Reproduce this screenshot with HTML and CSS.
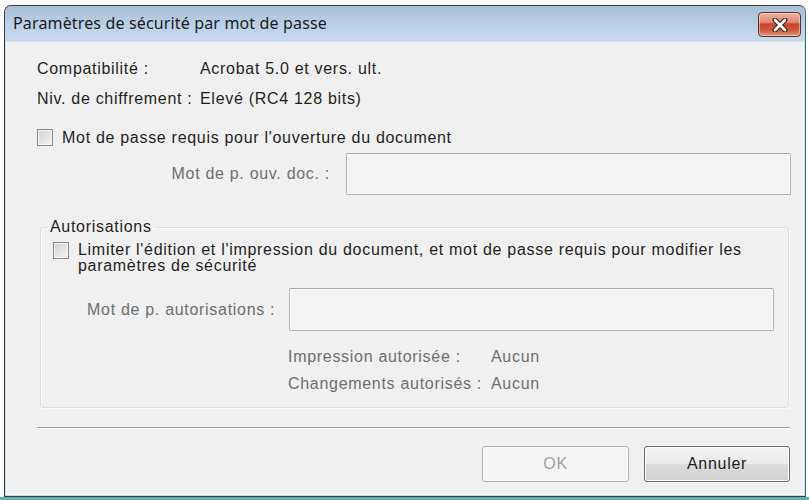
FILE: index.html
```html
<!DOCTYPE html>
<html lang="fr">
<head>
<meta charset="utf-8">
<title>Paramètres de sécurité par mot de passe</title>
<link rel="stylesheet" href="styles.css">
</head>
<body>
<div class="screen">
  <div class="window">
    <div class="titlebar">
      <span class="title">Paramètres de sécurité par mot de passe</span>
      <button class="close" aria-label="Fermer">
        <svg width="20" height="14" viewBox="0 0 20 14">
          <path d="M5 2 L15 12 M15 2 L5 12" stroke="#4a2a22" stroke-width="5" stroke-linecap="round"/>
          <path d="M5 2 L15 12 M15 2 L5 12" stroke="#ffffff" stroke-width="2.6" stroke-linecap="round"/>
        </svg>
      </button>
    </div>
    <div class="body">
      <div class="info">
        <span>Compatibilité :</span><span>Acrobat 5.0 et vers. ult.</span>
        <span>Niv. de chiffrement :</span><span>Elevé (RC4 128 bits)</span>
      </div>
      <label class="check">
        <span class="box"></span>
        <span>Mot de passe requis pour l'ouverture du document</span>
      </label>
      <div class="pwd-row open">
        <span class="dim label">Mot de p. ouv. doc. :</span>
        <span class="field"></span>
      </div>
      <fieldset class="group">
        <legend>Autorisations</legend>
        <label class="check multi">
          <span class="box"></span>
          <span>Limiter l'édition et l'impression du document, et mot de passe requis pour modifier les paramètres de sécurité</span>
        </label>
        <div class="pwd-row perm">
          <span class="dim label">Mot de p. autorisations :</span>
          <span class="field"></span>
        </div>
        <div class="perm-info dim">
          <span>Impression autorisée :</span><span>Aucun</span>
          <span>Changements autorisés :</span><span>Aucun</span>
        </div>
      </fieldset>
      <div class="separator"></div>
      <div class="buttons">
        <button class="btn ok disabled">OK</button>
        <button class="btn">Annuler</button>
      </div>
    </div>
  </div>
</div>
</body>
</html>
```
FILE: styles.css
```css
html, body {
  margin: 0;
  padding: 0;
  background: #ffffff;
}

.screen {
  width: 809px;
  height: 497px;
  border-bottom: 3px solid #5cb3a8;
  overflow: hidden;
  font-family: "Liberation Sans", Arial, sans-serif;
  font-size: 16px;
  letter-spacing: 0.7px;
  color: #1f1f1f;
}

.window {
  box-sizing: border-box;
  width: 802px;
  height: 492px;
  margin: 5px 0 0 4px;
  border: 1px solid #3b3b3b;
  border-right-color: #3f6f6b;
  border-radius: 7px 7px 0 0;
  overflow: hidden;
  display: flex;
  flex-direction: column;
  background: #c4d7ec;
}

.titlebar {
  height: 35px;
  flex: none;
  display: flex;
  align-items: center;
  padding-left: 8px;
  padding-right: 4px;
  background: linear-gradient(#a9bfd6, #bcd2ea 60%, #c6daee);
}

.title {
  font-family: "Noto Sans", "Open Sans", sans-serif;
  font-size: 16px;
  letter-spacing: 0.15px;
  color: #1b1b1b;
  margin-top: -2px;
}

.close {
  margin-left: auto;
  align-self: flex-start;
  margin-top: 6px;
  width: 43px;
  height: 25px;
  padding: 0;
  border: 1px solid #5b3128;
  border-radius: 4px;
  background: linear-gradient(#edb3a3 0%, #dc8a74 40%, #c7452b 48%, #cc5a3e 75%, #e09a7e 100%);
  box-shadow: inset 0 0 0 1px rgba(255, 230, 220, 0.5);
  display: flex;
  align-items: center;
  justify-content: center;
}

.body {
  flex: 1;
  background: #f0f0f0;
  border-top: 1px solid #d4e0ee;
  margin: 0 1px 1px 1px;
  box-shadow: inset 1px 0 0 #fbfbfb, inset -1px 0 0 #fbfbfb, inset 0 -1px 0 #fbfbfb;
  padding: 17px 13px 0 31px;
  display: flex;
  flex-direction: column;
}

.info {
  display: grid;
  grid-template-columns: 163px auto;
  row-gap: 10px;
  line-height: 20px;
}

.check {
  display: flex;
  align-items: flex-start;
  gap: 9px;
  line-height: 20px;
  margin-top: 19px;
}

.box {
  flex: none;
  box-sizing: border-box;
  width: 16px;
  height: 17px;
  margin-top: 1px;
  border: 1px solid #8c8c8c;
  background: linear-gradient(135deg, #d2d2d2, #f4f4f4);
  box-shadow: inset 0 0 0 1px #f4f4f4;
}

.dim {
  color: #6f6f6f;
}

.label {
  flex: none;
  white-space: nowrap;
}

.pwd-row {
  display: flex;
  align-items: center;
}

.pwd-row.open {
  margin-top: 5px;
  justify-content: flex-end;
  gap: 16px;
}

.field {
  display: block;
  box-sizing: border-box;
  border: 1px solid #b3b3b3;
  border-top-color: #a8a8a8;
  border-radius: 2px;
  background: #f3f3f3;
  box-shadow: inset 0 0 0 1px #fafafa;
}

.pwd-row.open .field {
  width: 445px;
  height: 42px;
}

.group {
  margin: 22px 2px 0 3px;
  padding: 5px 14px 13px 7px;
  border: 1px solid #dedede;
  border-radius: 3px;
  box-shadow: inset 1px 1px 0 #fafafa, 1px 1px 0 #fafafa;
  min-width: 0;
}

.group legend {
  padding: 0 2px;
  line-height: 20px;
  color: #1f1f1f;
}

.check.multi {
  margin-top: 0;
  margin-left: 5px;
  line-height: 16px;
}

.check.multi .box {
  margin-top: 0;
}

.pwd-row.perm {
  margin-top: 14px;
  margin-left: 39px;
}

.pwd-row.perm .field {
  width: 485px;
  height: 43px;
  margin-left: auto;
}

.perm-info {
  display: grid;
  grid-template-columns: 203px auto;
  row-gap: 7px;
  line-height: 20px;
  margin-top: 16px;
  margin-left: 240px;
}

.separator {
  margin: 19px 1px 0 0;
  height: 1px;
  background: #a0a0a0;
  box-shadow: 0 1px 0 #ffffff;
}

.buttons {
  display: flex;
  justify-content: flex-end;
  gap: 15px;
  margin-top: 18px;
  padding-right: 1px;
}

.btn {
  box-sizing: border-box;
  width: 146px;
  height: 36px;
  font-family: "Liberation Sans", Arial, sans-serif;
  font-size: 16px;
  letter-spacing: 0.7px;
  color: #1c1c1c;
  border: 1px solid #707070;
  border-radius: 3px;
  background: linear-gradient(#f2f2f2 0%, #ebebeb 50%, #dddddd 51%, #cfcfcf 100%);
  box-shadow: inset 0 0 0 1px #fbfbfb;
}

.btn.ok {
  width: 147px;
}

.btn.disabled {
  color: #a3a3a3;
  border-color: #adb2b5;
  background: #f4f4f4;
}
```
